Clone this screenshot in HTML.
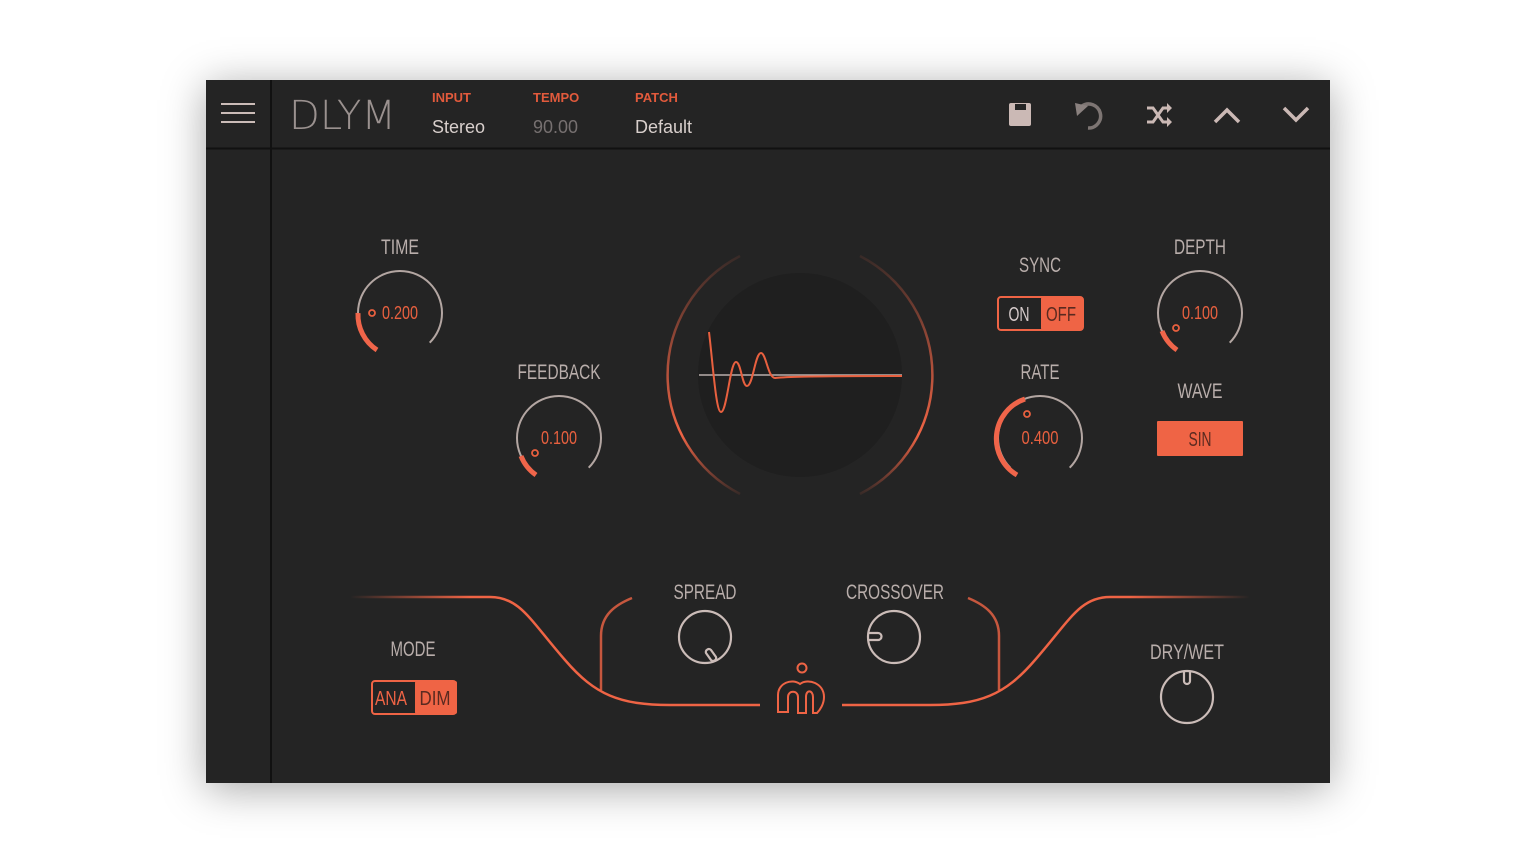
<!DOCTYPE html>
<html><head><meta charset="utf-8"><style>
html,body{margin:0;padding:0;background:#fff;width:1536px;height:864px;overflow:hidden}
#p{position:absolute;left:206px;top:80px;width:1124px;height:703px;background:#242424;box-shadow:0 6px 40px rgba(0,0,0,0.35)}
svg{position:absolute;left:0;top:0}
.l{font-family:"Liberation Sans",sans-serif;fill:#b9aeab;font-size:21px;text-anchor:middle}
.v{font-family:"Liberation Sans",sans-serif;fill:#e8603f;font-size:18px;text-anchor:middle}
.h{font-family:"Liberation Sans",sans-serif}
</style></head><body>
<div id="p"></div>
<svg width="1536" height="864" viewBox="0 0 1536 864">
<defs>
<linearGradient id="fl" gradientUnits="userSpaceOnUse" x1="350" y1="0" x2="470" y2="0"><stop offset="0" stop-color="#ef6445" stop-opacity="0"/><stop offset="1" stop-color="#ef6445"/></linearGradient>
<linearGradient id="fr" gradientUnits="userSpaceOnUse" x1="1250" y1="0" x2="1130" y2="0"><stop offset="0" stop-color="#ef6445" stop-opacity="0"/><stop offset="1" stop-color="#ef6445"/></linearGradient>
<linearGradient id="rg" x1="0" y1="0" x2="0" y2="1"><stop offset="0" stop-color="#ef6445" stop-opacity="0.1"/><stop offset="0.4" stop-color="#ef6445" stop-opacity="0.6"/><stop offset="0.75" stop-color="#ef6445" stop-opacity="1"/><stop offset="1" stop-color="#ef6445" stop-opacity="0.1"/></linearGradient>
</defs>
<line x1="206" y1="148.5" x2="1330" y2="148.5" stroke="#111" stroke-width="2"/>
<line x1="271" y1="80" x2="271" y2="783" stroke="#111" stroke-width="2"/>
<g stroke="#cbbcb8" stroke-width="2"><line x1="221" y1="104" x2="255" y2="104"/><line x1="221" y1="113" x2="255" y2="113"/><line x1="221" y1="122" x2="255" y2="122"/></g>
<text x="289" y="129" font-size="40" fill="#9a918f" textLength="107" lengthAdjust="spacingAndGlyphs" style="font-family:'DejaVu Sans','Liberation Sans',sans-serif;font-weight:200">DLYM</text>
<g class="h" font-size="13" fill="#e25a3c" font-weight="bold"><text x="432" y="102">INPUT</text><text x="533" y="102">TEMPO</text><text x="635" y="102">PATCH</text></g>
<g class="h" font-size="18"><text x="432" y="133" fill="#d8cfcc">Stereo</text><text x="533" y="133" fill="#767070">90.00</text><text x="635" y="133" fill="#d8cfcc">Default</text></g>
<g fill="#cbb9b5" stroke="#cbb9b5">
<rect x="1009" y="103" width="22" height="23" rx="2" stroke="none"/>
<rect x="1015" y="104" width="11" height="6" fill="#242424" stroke="none"/>
<path d="M1082 106 A12 12 0 1 1 1088 128" fill="none" stroke-width="3.5" stroke="#7d7573"/>
<path d="M1075 103 L1077 116 L1088 106 Z" stroke="none" fill="#8a817f"/>
<path d="M1147 108 h6 l10 14 h6 M1147 122 h6 l10 -14 h6" fill="none" stroke-width="3"/>
<path d="M1167 103 l5 5 -5 5 z M1167 117 l5 5 -5 5 z" stroke="none"/>
<path d="M1215 122 L1227 110 L1239 122" fill="none" stroke-width="3.5"/>
<path d="M1284 108 L1296 120 L1308 108" fill="none" stroke-width="3.5"/>
</g>
<g class="l" style="letter-spacing:0">
<text x="400" y="254" textLength="38" lengthAdjust="spacingAndGlyphs">TIME</text>
<text x="559" y="379" textLength="83" lengthAdjust="spacingAndGlyphs">FEEDBACK</text>
<text x="1040" y="272" textLength="42" lengthAdjust="spacingAndGlyphs">SYNC</text>
<text x="1040" y="379" textLength="39" lengthAdjust="spacingAndGlyphs">RATE</text>
<text x="1200" y="254" textLength="52" lengthAdjust="spacingAndGlyphs">DEPTH</text>
<text x="1200" y="398" textLength="45" lengthAdjust="spacingAndGlyphs">WAVE</text>
<text x="413" y="656" textLength="45" lengthAdjust="spacingAndGlyphs">MODE</text>
<text x="705" y="599" textLength="63" lengthAdjust="spacingAndGlyphs">SPREAD</text>
<text x="895" y="599" textLength="98" lengthAdjust="spacingAndGlyphs">CROSSOVER</text>
<text x="1187" y="659" textLength="74" lengthAdjust="spacingAndGlyphs">DRY/WET</text>
</g>
<g fill="none" stroke="#b3a6a2" stroke-width="2">
<path d="M370.3 342.7 A42 42 0 1 1 429.7 342.7"/>
<path d="M529.3 467.7 A42 42 0 1 1 588.7 467.7"/>
<path d="M1010.3 467.7 A42 42 0 1 1 1069.7 467.7"/>
<path d="M1170.3 342.7 A42 42 0 1 1 1229.7 342.7"/>
</g>
<g fill="none" stroke="#f0654a" stroke-width="5">
<path d="M377 350 A42 42 0 0 1 358 313"/>
<path d="M536 475 A42 42 0 0 1 521 456"/>
<path d="M1017 475 A42 42 0 0 1 1025 399"/>
<path d="M1177 350 A42 42 0 0 1 1162 331"/>
</g>
<g fill="none" stroke="#e8603f" stroke-width="1.8">
<circle cx="372" cy="313" r="3"/><circle cx="535" cy="453" r="3"/><circle cx="1176" cy="328" r="3"/><circle cx="1027" cy="414" r="3"/>
</g>
<text x="400" y="319" class="v" textLength="36" lengthAdjust="spacingAndGlyphs">0.200</text>
<text x="559" y="444" class="v" textLength="36" lengthAdjust="spacingAndGlyphs">0.100</text>
<text x="1040" y="444" class="v" textLength="37" lengthAdjust="spacingAndGlyphs">0.400</text>
<text x="1200" y="319" class="v" textLength="36" lengthAdjust="spacingAndGlyphs">0.100</text>
<circle cx="800" cy="375" r="102" fill="#1f1f1f"/>
<path d="M740 256 A134 134 0 0 0 740 494" fill="none" stroke="url(#rg)" stroke-width="2.5"/>
<path d="M860 256 A134 134 0 0 1 860 494" fill="none" stroke="url(#rg)" stroke-width="2.5"/>
<line x1="699" y1="375" x2="902" y2="375" stroke="#b9aeab" stroke-width="1.5"/>
<path d="M709 332 C713 365 716 412 721 412 C727 412 730 362 736 362 C741 362 742 386 747 386 C753 386 755 353 761 353 C766 353 768 378 775 378 C785 377 800 376 902 376" fill="none" stroke="#e8603f" stroke-width="2"/>
<rect x="998" y="297" width="85" height="33" rx="3" fill="none" stroke="#ef6445" stroke-width="2"/>
<rect x="1041" y="297" width="42" height="33" rx="2" fill="#ef6445"/>
<text x="1019" y="321" class="v" style="font-size:20px;fill:#d5caca" textLength="21" lengthAdjust="spacingAndGlyphs">ON</text>
<text x="1061" y="321" class="v" style="font-size:20px;fill:#5a2a20" textLength="30" lengthAdjust="spacingAndGlyphs">OFF</text>
<rect x="1157" y="421" width="86" height="35" fill="#ef6445" rx="1"/>
<text x="1200" y="446" class="v" style="font-size:20px;fill:#5a2a20" textLength="23" lengthAdjust="spacingAndGlyphs">SIN</text>
<rect x="372" y="681" width="84" height="33" rx="3" fill="none" stroke="#ef6445" stroke-width="2"/>
<rect x="415" y="681" width="42" height="33" rx="2" fill="#ef6445"/>
<text x="391" y="705" class="v" style="font-size:20px;fill:#ef6445" textLength="32" lengthAdjust="spacingAndGlyphs">ANA</text>
<text x="435" y="705" class="v" style="font-size:20px;fill:#5a2a20" textLength="31" lengthAdjust="spacingAndGlyphs">DIM</text>
<g fill="none" stroke-width="2.5">
<path d="M350 597 H490" stroke="url(#fl)"/>
<path d="M1110 597 H1250" stroke="url(#fr)"/>
<path d="M490 597 C520 597 530 620 565 660 C595 695 620 705 670 705 H760" stroke="#ef6445"/>
<path d="M1110 597 C1080 597 1070 620 1035 660 C1005 695 980 705 930 705 H842" stroke="#ef6445"/>
<path d="M601 690 V636 C601 615 615 605 632 598" stroke="#ef6445" stroke-opacity="0.8"/>
<path d="M999 690 V636 C999 615 985 605 968 598" stroke="#ef6445" stroke-opacity="0.8"/>
</g>
<g fill="none" stroke="#ef6445" stroke-width="2">
<circle cx="802" cy="668" r="4.5"/>
<path d="M778 712 V695 C778 683 792 678 800 684 C808 678 824 683 824 697 C824 704 820 710 817 713 L813 713 V697 C813 690 806 689 806 697 V713 H798 V697 C798 690 788 690 788 697 V712 Z"/>
</g>
<g fill="none" stroke="#cbbcb8" stroke-width="2.2">
<circle cx="705" cy="637" r="26"/>
<circle cx="894" cy="637" r="26"/>
<circle cx="1187" cy="697" r="26"/>
<path d="M711 650 l5 7 a3 3 0 0 1 -5 3 l-5 -7 a3 3 0 0 1 5 -3z"/>
<path d="M869 633 h9 a3 3 0 0 1 0 7 h-9"/>
<path d="M1184 672 v9 a3 3 0 0 0 6 0 v-9"/>
</g>
</svg>
</body></html>
